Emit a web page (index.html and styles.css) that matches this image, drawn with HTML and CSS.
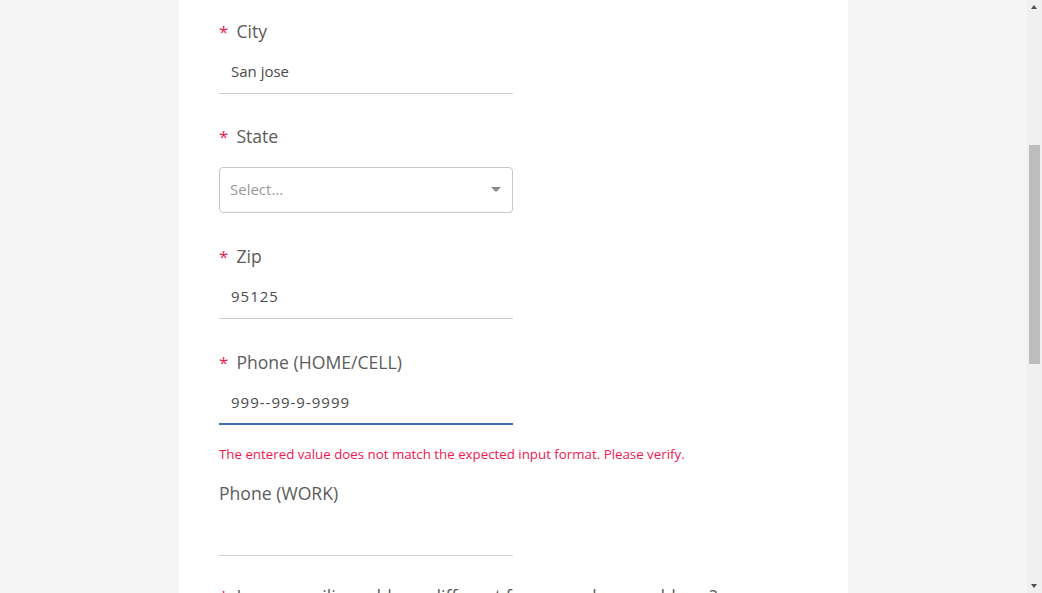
FILE: index.html
```html
<!DOCTYPE html>
<html lang="en">
<head>
<meta charset="utf-8">
<title>Address form</title>
<link rel="stylesheet" href="styles.css">
</head>
<body>
<div class="page">
  <main class="card">
    <form class="form">
      <div class="field">
        <label class="label"><span class="req">*</span>City</label>
        <input class="text-input" type="text" value="San jose">
      </div>
      <div class="field">
        <label class="label"><span class="req">*</span>State</label>
        <div class="select">
          <span class="placeholder">Select...</span>
          <svg class="caret" width="10" height="6" viewBox="0 0 10 6"><path d="M0 0h10L5 5z" fill="#888"/></svg>
        </div>
      </div>
      <div class="field">
        <label class="label"><span class="req">*</span>Zip</label>
        <input class="text-input num" type="text" value="95125">
      </div>
      <div class="field has-error">
        <label class="label"><span class="req">*</span>Phone (HOME/CELL)</label>
        <input class="text-input num focused" type="text" value="999--99-9-9999">
        <div class="error">The entered value does not match the expected input format. Please verify.</div>
      </div>
      <div class="field field-tight">
        <label class="label">Phone (WORK)</label>
        <input class="text-input" type="text" value="">
      </div>
      <div class="field">
        <label class="label"><span class="req">*</span>Is your mailing address different from your home address?</label>
      </div>
    </form>
  </main>
</div>
<div class="scrollbar">
  <div class="sb-arrow sb-up"></div>
  <div class="sb-thumb"></div>
  <div class="sb-arrow sb-down"></div>
</div>
</body>
</html>
```
FILE: styles.css
```css
html, body {
  margin: 0;
  height: 100%;
  overflow: hidden;
}
body {
  background: #f5f5f5;
  font-family: "Open Sans", "Noto Sans", sans-serif;
  color: #555;
}
.page {
  width: 1027px;
  height: 100%;
}
.card {
  width: 589px;
  margin: 0 auto;
  background: #fff;
  min-height: 100%;
  padding: 18px 40px 0;
}
.form {
  display: flex;
  flex-direction: column;
}
.field {
  display: flex;
  flex-direction: column;
  margin-bottom: 30px;
}
.field:first-child {
  margin-bottom: 29px;
}
.field.has-error {
  margin-bottom: 16px;
}
.field.field-tight {
  margin-bottom: 27px;
}
.label {
  display: block;
  height: 26px;
  line-height: 26px;
  font-size: 17.6px;
  color: #5b5b5b;
  white-space: nowrap;
}
.req {
  color: #f0174f;
  margin-right: 8px;
  font-size: 17px;
}
.text-input {
  box-sizing: border-box;
  width: 294px;
  height: 42px;
  margin-top: 8px;
  padding: 0 11px 3px 12px;
  border: none;
  border-bottom: 1px solid #cfcfcf;
  font-family: inherit;
  font-size: 15px;
  color: #4a4a4a;
  background: transparent;
  outline: none;
}
.text-input.num {
  letter-spacing: 1px;
}
.text-input.focused {
  border-bottom: 2px solid #3b6cb3;
}
.select {
  box-sizing: border-box;
  width: 294px;
  height: 46px;
  margin-top: 18px;
  border: 1px solid #c8c8c8;
  border-radius: 4px;
  display: flex;
  align-items: center;
  justify-content: space-between;
  padding: 0 11px 3px 10px;
}
.placeholder {
  font-size: 15px;
  color: #9a9a9a;
}
.caret {
  display: block;
  margin-top: 3px;
}
.error {
  margin-top: 19px;
  font-size: 13.3px;
  line-height: 20px;
  color: #f0174f;
  white-space: nowrap;
}
.scrollbar {
  position: fixed;
  top: 0;
  right: 0;
  width: 15px;
  height: 100%;
  background: #f0f0f0;
}
.sb-thumb {
  position: absolute;
  left: 2px;
  width: 11px;
  top: 145px;
  height: 219px;
  background: #bdbdbd;
}
.sb-arrow {
  position: absolute;
  left: 4px;
  width: 0;
  height: 0;
  border-left: 3.5px solid transparent;
  border-right: 3.5px solid transparent;
}
.sb-up {
  top: 5px;
  border-bottom: 4px solid #505050;
}
.sb-down {
  bottom: 5px;
  border-top: 4px solid #505050;
}
```
